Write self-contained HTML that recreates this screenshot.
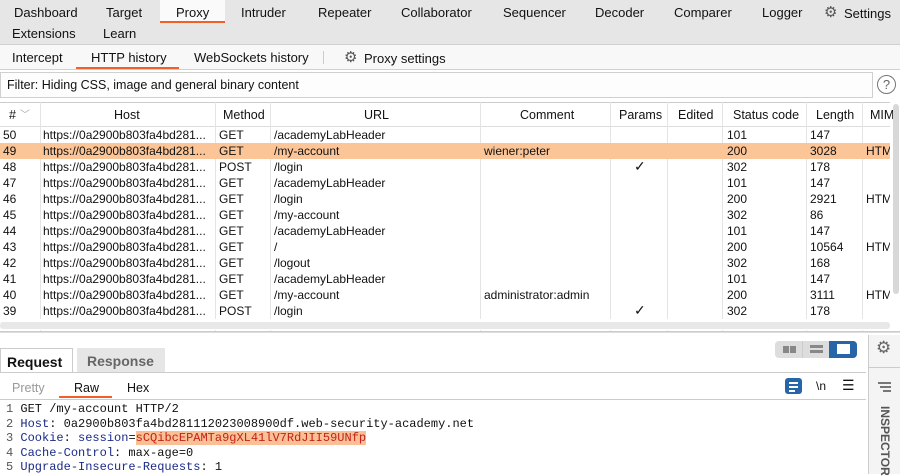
<!DOCTYPE html>
<html><head><style>
*{box-sizing:border-box;margin:0;padding:0}
body{width:900px;height:474px;overflow:hidden;background:#fff;font-family:"Liberation Sans",sans-serif;font-size:12.5px;color:#111;position:relative}
.abs{position:absolute}
.top{left:0;top:0;width:900px;height:45px;background:#e6e6e6;border-bottom:1px solid #cfcfcf}
.t{position:absolute;font-size:13px;white-space:nowrap}
.sub{left:0;top:45px;width:900px;height:25px;background:#f8f8f8;border-bottom:1px solid #d0d0d0}
.filter{left:0;top:72px;width:873px;height:26px;border:1px solid #d0d0d0;background:#fdfdfd;padding:5px 6px;font-size:12.5px}
.hdr{left:0;top:102px;width:890px;height:25px;border-top:1px solid #ccc;border-bottom:1px solid #ddd;background:#fff}
.row{position:absolute;left:0;width:890px;height:16px;font-size:12px}
.c{position:absolute;top:1px;white-space:nowrap}
.vl{position:absolute;top:102px;height:229px;width:1px;background:#e4e4e4}
.code{position:absolute;left:0;font-family:"Liberation Mono",monospace;font-size:12px;white-space:pre}
.k{color:#1a2a8a}
</style></head><body>
<div class="abs top">
<div class="t" style="left:14px;top:5px">Dashboard</div>
<div class="t" style="left:106px;top:5px">Target</div>
<div class="abs" style="left:160px;top:0;width:65px;height:23px;background:#fafafa;border-bottom:2px solid #f0602a"></div>
<div class="t" style="left:176px;top:5px">Proxy</div>
<div class="t" style="left:241px;top:5px">Intruder</div>
<div class="t" style="left:318px;top:5px">Repeater</div>
<div class="t" style="left:401px;top:5px">Collaborator</div>
<div class="t" style="left:503px;top:5px">Sequencer</div>
<div class="t" style="left:595px;top:5px">Decoder</div>
<div class="t" style="left:674px;top:5px">Comparer</div>
<div class="t" style="left:762px;top:5px">Logger</div>
<div class="t" style="left:824px;top:3px;font-size:15px;color:#555">⚙</div>
<div class="t" style="left:844px;top:6px">Settings</div>
<div class="t" style="left:12px;top:26px">Extensions</div>
<div class="t" style="left:103px;top:26px">Learn</div>
</div>
<div class="abs sub">
<div class="t" style="left:12px;top:5px">Intercept</div>
<div class="abs" style="left:76px;top:22px;width:103px;height:2px;background:#f0602a"></div>
<div class="t" style="left:91px;top:5px">HTTP history</div>
<div class="t" style="left:194px;top:5px">WebSockets history</div>
<div class="abs" style="left:323px;top:6px;width:1px;height:13px;background:#ccc"></div>
<div class="t" style="left:344px;top:3px;font-size:15px;color:#555">⚙</div>
<div class="t" style="left:364px;top:6px">Proxy settings</div>
</div>
<div class="abs filter">Filter: Hiding CSS, image and general binary content</div>
<div class="abs" style="left:877px;top:75px;width:19px;height:19px;border:1.3px solid #777;border-radius:50%;text-align:center;font-size:13px;line-height:17px;color:#666">?</div>
<div class="abs hdr">
<div class="c" style="left:9px;top:5px">#</div><div class="c" style="left:20px;top:3px;color:#aaa;font-size:10px">﹀</div>
<div class="c" style="left:114px;top:5px">Host</div>
<div class="c" style="left:223px;top:5px">Method</div>
<div class="c" style="left:364px;top:5px">URL</div>
<div class="c" style="left:520px;top:5px">Comment</div>
<div class="c" style="left:619px;top:5px">Params</div>
<div class="c" style="left:678px;top:5px">Edited</div>
<div class="c" style="left:733px;top:5px">Status code</div>
<div class="c" style="left:816px;top:5px">Length</div>
<div class="c" style="left:870px;top:5px">MIM</div>
</div>
<div class="vl" style="left:40px"></div><div class="vl" style="left:215px"></div><div class="vl" style="left:270px"></div><div class="vl" style="left:480px"></div><div class="vl" style="left:610px"></div><div class="vl" style="left:667px"></div><div class="vl" style="left:722px"></div><div class="vl" style="left:806px"></div><div class="vl" style="left:862px"></div>
<div id="rows"></div>
<div class="abs" style="left:893px;top:104px;width:6px;height:190px;background:#d8d8d8;border-radius:3px"></div>
<div class="abs" style="left:0;top:319px;width:890px;height:11px;background:#fff"></div>
<div class="abs" style="left:0;top:322px;width:890px;height:7px;background:#e8e8e8;border-radius:3px"></div>
<div class="abs" style="left:0;top:331px;width:900px;height:2px;border-top:1px solid #ccc;border-bottom:1px solid #ddd"></div>
<div class="abs" style="left:0;top:348px;width:73px;height:25px;border:1px solid #ccc;border-bottom:none;background:#fff;font-weight:bold;font-size:14px;padding:5px 6px">Request</div>
<div class="abs" style="left:77px;top:348px;width:88px;height:24px;background:#e6e6e6;font-weight:bold;font-size:14px;color:#666;padding:5px 10px">Response</div>
<div class="abs" style="left:0;top:372px;width:866px;height:1px;background:#ccc"></div>
<div class="abs" style="left:775px;top:341px;width:82px;height:17px;background:#ddd;border-radius:4px"></div>
<div class="abs" style="left:802px;top:341px;width:1px;height:17px;background:#ccc"></div>
<div class="abs" style="left:829px;top:341px;width:28px;height:17px;background:#2565a8;border-radius:0 4px 4px 0"></div>
<div class="abs" style="left:783px;top:346px;width:6px;height:7px;background:#888"></div><div class="abs" style="left:790px;top:346px;width:6px;height:7px;background:#888"></div>
<div class="abs" style="left:810px;top:345px;width:13px;height:3px;background:#888"></div><div class="abs" style="left:810px;top:350px;width:13px;height:3px;background:#888"></div>
<div class="abs" style="left:837px;top:344px;width:13px;height:10px;background:#fff"></div>
<div class="abs" style="left:868px;top:335px;width:1px;height:139px;background:#ccc"></div>
<div class="abs" style="left:869px;top:335px;width:31px;height:139px;background:#f4f4f4"></div>
<div class="t" style="left:876px;top:338px;font-size:17px;color:#666">⚙</div>
<div class="abs" style="left:869px;top:367px;width:31px;height:1px;background:#ccc"></div>
<div class="abs" style="left:878px;top:382px;width:13px;height:1.5px;background:#777"></div><div class="abs" style="left:880px;top:386px;width:11px;height:1.5px;background:#777"></div><div class="abs" style="left:883px;top:390px;width:8px;height:1.5px;background:#777"></div>
<div class="t" style="left:878px;top:406px;font-weight:bold;font-size:12px;color:#555;writing-mode:vertical-rl">INSPECTOR</div>
<div class="t" style="left:12px;top:381px;color:#999;font-size:12.5px">Pretty</div>
<div class="t" style="left:74px;top:381px;font-size:12.5px">Raw</div>
<div class="abs" style="left:59px;top:396px;width:53px;height:2px;background:#f0602a"></div>
<div class="t" style="left:127px;top:381px;font-size:12.5px">Hex</div>
<div class="abs" style="left:0;top:399px;width:866px;height:1px;background:#ccc"></div>
<div class="abs" style="left:785px;top:378px;width:17px;height:16px;background:#2565a8;border-radius:3px"></div>
<div class="abs" style="left:789px;top:382px;width:9px;height:1.5px;background:#fff"></div><div class="abs" style="left:789px;top:386px;width:9px;height:1.5px;background:#fff"></div><div class="abs" style="left:789px;top:390px;width:6px;height:1.5px;background:#fff"></div>
<div class="t" style="left:816px;top:379px;font-size:12px">\n</div>
<div class="t" style="left:842px;top:377px;font-size:14px">☰</div>
<div class="code" style="top:402px;line-height:14.5px;left:6px"><span style="color:#555">1</span> GET /my-account HTTP/2
<span style="color:#555">2</span> <span class="k">Host</span>: 0a2900b803fa4bd281112023008900df.web-security-academy.net
<span style="color:#555">3</span> <span class="k">Cookie</span>: <span class="k">session</span>=<span style="background:#fbbf95;color:#c0241a">sCQibcEPAMTa9gXL41lV7RdJII59UNfp</span>
<span style="color:#555">4</span> <span class="k">Cache-Control</span>: max-age=0
<span style="color:#555">5</span> <span class="k">Upgrade-Insecure-Requests</span>: 1</div>
<script>
var d=[["50","GET","/academyLabHeader","","","101","147",""],["49","GET","/my-account","wiener:peter","","200","3028","HTM"],["48","POST","/login","","✓","302","178",""],["47","GET","/academyLabHeader","","","101","147",""],["46","GET","/login","","","200","2921","HTM"],["45","GET","/my-account","","","302","86",""],["44","GET","/academyLabHeader","","","101","147",""],["43","GET","/","","","200","10564","HTM"],["42","GET","/logout","","","302","168",""],["41","GET","/academyLabHeader","","","101","147",""],["40","GET","/my-account","administrator:admin","","200","3111","HTM"],["39","POST","/login","","✓","302","178",""]];
var h="";d.forEach(function(r,i){var y=127+i*16;h+='<div class="row" style="top:'+y+'px;'+(i==1?'background:#fcc597;':'')+'">'+
'<div class="c" style="left:3px">'+r[0]+'</div><div class="c" style="left:43px">https://0a2900b803fa4bd281...</div><div class="c" style="left:219px">'+r[1]+'</div><div class="c" style="left:274px">'+r[2]+'</div><div class="c" style="left:484px">'+r[3]+'</div><div class="c" style="left:634px;font-size:14px;top:-1px">'+r[4]+'</div><div class="c" style="left:727px">'+r[5]+'</div><div class="c" style="left:810px">'+r[6]+'</div><div class="c" style="left:866px;width:24px;overflow:hidden">'+r[7]+'</div></div>';});
document.getElementById("rows").innerHTML=h;
</script>
</body></html>
